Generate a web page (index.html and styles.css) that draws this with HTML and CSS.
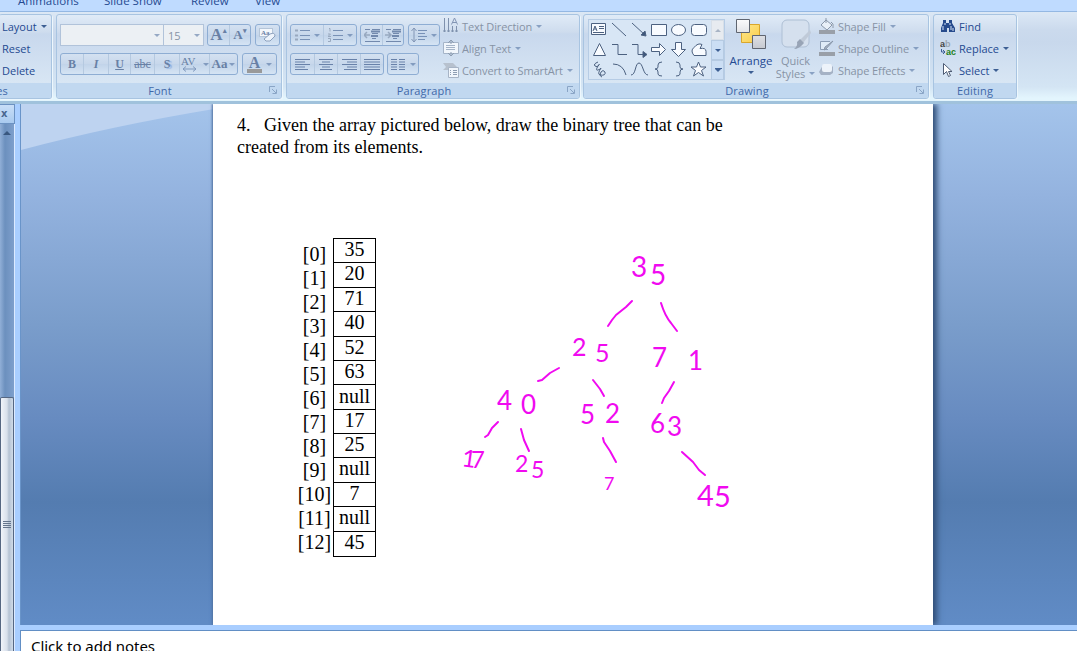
FILE: index.html
```
<!DOCTYPE html>
<html lang="en">
<head>
<meta charset="utf-8">
<title>Presentation editor</title>
<link rel="stylesheet" href="styles.css">
</head>
<body>
<div class="app">
  <nav class="tabs"><span class="t1">Animations</span><span class="t2">Slide Show</span><span class="t3">Review</span><span class="t4">View</span></nav>

  <header class="ribbon">
    <section class="group slides">
      <div class="body col">
        <div class="cmd"><span>Layout</span><i class="dd"></i></div>
        <div class="cmd"><span>Reset</span></div>
        <div class="cmd"><span>Delete</span></div>
      </div>
      <footer><span>Slides</span></footer>
    </section>

    <section class="group font">
      <div class="body rows">
        <div class="row">
          <div class="combo name"><i class="dd"></i></div>
          <div class="combo size"><span>15</span><i class="dd"></i></div>
          <div class="set gap3"><b class="w22 big">A<sup>▴</sup></b><b class="w22 small">A<sup>▾</sup></b></div>
          <div class="set gap4"><b class="w23"><svg width="20" height="18" viewBox="0 0 20 18"><rect x="1.500" y="2.500" width="13" height="8" fill="#f3f7fc" stroke="#b5c5d8"/><text x="3" y="9" class="mini">Aa</text><path d="M6 13l6-5q5-2 5 2l-5 5q-5 1-6-2z" fill="#edf3fb" stroke="#8ba0bd"/></svg></b></div>
        </div>
        <div class="row">
          <div class="set style"><b class="w23">B</b><b class="w25 it">I</b><b class="w23 un">U</b><b class="w24 st">abc</b><b class="w25 sh">S</b><b class="w31"><svg width="18" height="18" viewBox="0 0 18 18"><text x="0" y="10" class="av">AV</text><path d="M2 14H15M5 11.500L2 14l3 2.500M12 11.500l3 2.500-3 2.500" fill="none" stroke="#8099bd"/></svg><i class="dd"></i></b><b class="w29 aa">Aa<i class="dd"></i></b></div>
          <div class="set gap4"><b class="w34 fc"><span>A</span><i class="dd"></i></b></div>
        </div>
      </div>
      <footer><span>Font</span><svg class="launch" width="8" height="8" viewBox="0 0 8 8"><path d="M.5 6V.5H6M3 3l4 4M7.500 3.500v4h-4" fill="none" stroke="#8aa5c6"/></svg></footer>
    </section>

    <section class="group para">
      <div class="body split">
        <div class="rows">
          <div class="row">
            <div class="set"><b class="w32"><svg width="15" height="16" viewBox="0 0 15 16"><path d="M5 3.500H15M5 8.500H15M5 12.500H15" stroke="#7891b6"/><path d="M0 3.500h3M0 8.500h3M0 12.500h3" stroke="#99a9bf" stroke-width="2"/></svg><i class="dd"></i></b><b class="w34"><svg width="15" height="16" viewBox="0 0 15 16"><path d="M5 3.500H15M5 8.500H15M5 12.500H15" stroke="#7891b6"/><path d="M1 1.500h1v3M0 7h2.500L0 9.500h3M0 11.500h2.500v3H0" fill="none" stroke="#99a9bf"/></svg><i class="dd"></i></b></div>
            <div class="set gap3"><b class="w22"><svg width="16" height="16" viewBox="0 0 16 16"><path d="M1 2.500H6M8 2.500H16M8 6.500H14M8 11.500H12M1 14.500H16" stroke="#7289ad"/><path d="M7 4.500H16M7 9H14" stroke="#7289ad" stroke-width="2"/><path d="M0 8h6M3 5L0 8l3 3" fill="none" stroke="#98a9c0" stroke-width="1.500"/></svg></b><b class="w22"><svg width="16" height="16" viewBox="0 0 16 16"><path d="M1 2.500H6M8 2.500H16M8 6.500H14M8 11.500H12M1 14.500H16" stroke="#7289ad"/><path d="M7 4.500H16M7 9H14" stroke="#7289ad" stroke-width="2"/><path d="M0 8h6M3 5l3 3-3 3" fill="none" stroke="#98a9c0" stroke-width="1.500"/></svg></b></div>
            <div class="set gap4"><b class="w31"><svg width="16" height="16" viewBox="0 0 16 16"><path d="M7 3.500H16M7 6.500H14M7 9.500H16M7 12.500H14" stroke="#7891b6"/><path d="M3 1v14M.5 4L3 1l2.500 3M.5 12L3 15l2.500-3" fill="none" stroke="#8296b5"/></svg><i class="dd"></i></b></div>
          </div>
          <div class="row align">
            <div class="set"><b class="w23"><svg width="16" height="13" viewBox="0 0 16 13"><path d="M0 1.500H15M0 4H10M0 6.500H15M0 9H10M0 11.500H13"/></svg></b><b class="w23"><svg width="16" height="13" viewBox="0 0 16 13"><path d="M1 1.500H15M4 4H12M1 6.500H15M4 9H12M2 11.500H14"/></svg></b><b class="w23"><svg width="16" height="13" viewBox="0 0 16 13"><path d="M1 1.500H16M6 4H16M1 6.500H16M6 9H16M3 11.500H16"/></svg></b><b class="w23"><svg width="16" height="13" viewBox="0 0 16 13"><path d="M0 1.500H16M0 4H16M0 6.500H16M0 9H16M0 11.500H16"/></svg></b></div>
            <div class="set gap3"><b class="w31"><svg width="15" height="13" viewBox="0 0 15 13"><path d="M0 1.500H6M8 1.500H14M0 4H6M8 4H14M0 6.500H6M8 6.500H14M0 9H6M8 9H14M0 11.500H6M8 11.500H14"/></svg><i class="dd"></i></b></div>
          </div>
        </div>
        <div class="col off">
          <div class="cmd"><svg width="16" height="16" viewBox="0 0 16 16"><path d="M1.500 0v14M5.500 0v14M9.500 8v6M13.500 8v6M0 13h3M4 13h3M8 13h3M12 13h3" stroke="#7f91ad" fill="none"/><path d="M8.500 6.500L11.500 0l3 6.500M9.500 4.500h4" stroke="#8295b4" fill="none"/></svg><span>Text Direction</span><i class="dd"></i></div>
          <div class="cmd"><svg width="16" height="16" viewBox="0 0 16 16"><path d="M.5 2.500h15v11H.5z" fill="#f1f6fc" stroke="#a5b4c8"/><path d="M3 5.500h9M3 7.500h9M3 9.500h9" stroke="#a5b4c8"/><path d="M8 0v4M5 3l3-3 3 3M8 12v4M5 13l3 3 3-3" fill="none" stroke="#8d9db2"/></svg><span>Align Text</span><i class="dd"></i></div>
          <div class="cmd"><svg width="16" height="16" viewBox="0 0 16 16"><path d="M0 1h10l4 4-3 3H0l3-3z" fill="#b7c1ce"/><path d="M5.500 5.500h10v10h-10z" fill="#f1f6fc" stroke="#a7b4c6"/><path d="M7 8.500h1M10 8.500h4M7 10.500h1M10 10.500h4M7 12.500h1M10 12.500h4" stroke="#8e9db2"/></svg><span>Convert to SmartArt</span><i class="dd"></i></div>
        </div>
      </div>
      <footer><span>Paragraph</span><svg class="launch" width="8" height="8" viewBox="0 0 8 8"><path d="M.5 6V.5H6M3 3l4 4M7.500 3.500v4h-4" fill="none" stroke="#8aa5c6"/></svg></footer>
    </section>

    <section class="group draw">
      <div class="body split">
        <div class="gallery">
          <svg class="shapes" width="122" height="60" viewBox="1 0 122 60">
            <g fill="#f8fbff" stroke="#4c6180">
              <path d="M3.500 3.500h14v11h-14z"/><path d="M5 11l2-5 2 5M6 9h2.500M11 6.500h5M11 8.500h5M5 12.500h11" fill="none"/>
              <path d="M24 3L38 16M44 3L57 15" fill="none"/><path d="M58 16l-5-1 4-4z" fill="#3f587c"/>
              <path d="M63.500 4.500h15v11h-15z"/><ellipse cx="90.500" cy="10" rx="7" ry="5.500"/><rect x="103.500" y="4.500" width="15" height="11" rx="3"/>
              <path d="M11.500 23.500l6 12h-12z"/><path d="M24 24.500h6v10h9M44 24.500h6v10h6" fill="none"/><path d="M55 31.500l4 3-4 3z" fill="#3f587c"/>
              <path d="M63.500 27.500h8v-4l6 6-6 6v-4h-8zM87.500 22.500h6v7h4l-7 7-7-7h4z"/><path d="M106 35.500q-4-5 0-8 4-5 8-3l-2 4q6-1 6 3v4z"/>
              <path d="M10 42q-5 2-3 4t4-1q1-2-1 1-3 5 0 4t3-2q-4 6-1 7 6 1 5-3-2-3-4 0-2 4 1 5M25 44q10 0 13 11M43 55c5 0 4-12 8-12s4 12 9 12" fill="none"/>
              <path d="M74 42q-4 0-4 3v2q0 2-3 2 3 0 3 3v2q0 2 4 2M88 42q4 0 4 3v2q0 2 3 2-3 0-3 3v2q0 2-4 2" fill="none"/><path d="M110.500 42l2 5h5.500l-4.500 3.500 2 5.500-5-3.500-5 3.500 2-5.500-4.500-3.500h5.500z"/>
            </g>
          </svg>
          <div class="scroll"><b class="dis"><i class="up"></i></b><b><i class="dd"></i></b><b><i class="dd more"></i></b></div>
        </div>
        <div class="large arrange"><svg width="32" height="32" viewBox="0 0 32 32"><defs><linearGradient id="gy" x2="1" y2="1"><stop stop-color="#ffe88e"/><stop offset="1" stop-color="#f9cc48"/></linearGradient><linearGradient id="gg" x2="0" y2="1"><stop stop-color="#fbfbfc"/><stop offset="1" stop-color="#c6c9d0"/></linearGradient></defs><path d="M6.500 6.500h18v18h-18z" fill="url(#gy)" stroke="#d9a62c"/><path d="M1.500 1.500h13v13h-13zM17.500 17.500h13v13h-13z" fill="url(#gg)" stroke="#5f6570"/></svg><span>Arrange</span><i class="dd"></i></div>
        <div class="large quick"><svg width="32" height="32" viewBox="0 0 32 32"><rect x="2" y="2" width="27" height="27" rx="5" fill="#d5e0ee" stroke="#aebfd4"/><path d="M30 12L20 22l3 3 8-10z" fill="#c0cad8"/><path d="M20 21l4 4q-5 6-10 6 4-3 3-7z" fill="#98a4b6"/></svg><span>Quick</span><span class="styles">Styles<i class="dd"></i></span></div>
        <div class="col off">
          <div class="cmd"><svg width="16" height="16" viewBox="0 0 16 16"><path d="M2 7l5-5 6 5-5 5zM7 5V0M12 4q3 1 2 6" fill="#e9f0f8" stroke="#8997aa"/><path d="M0 12h16v4H0z" fill="#999fa8"/></svg><span>Shape Fill</span><i class="dd"></i></div>
          <div class="cmd"><svg width="16" height="16" viewBox="0 0 16 16"><path d="M11 1.500H1.500v8H9" fill="#dfebf7" stroke="#8b9db5"/><path d="M14 1L7 9l-2 1 1-3z" fill="#a4b1c2" stroke="#8997aa"/><path d="M0 12h16v4H0z" fill="#999fa8"/></svg><span>Shape Outline</span><i class="dd"></i></div>
          <div class="cmd"><svg width="16" height="16" viewBox="0 0 16 16"><path d="M4 3h8l2 2v6l-3 2H2l-2-3z" fill="#a5b2c5"/><rect x="3" y="2" width="10" height="8" rx="2" fill="#edf3fa"/></svg><span>Shape Effects</span><i class="dd"></i></div>
        </div>
      </div>
      <footer><span>Drawing</span><svg class="launch" width="8" height="8" viewBox="0 0 8 8"><path d="M.5 6V.5H6M3 3l4 4M7.500 3.500v4h-4" fill="none" stroke="#8aa5c6"/></svg></footer>
    </section>

    <section class="group edit">
      <div class="body col">
        <div class="cmd"><svg width="16" height="16" viewBox="0 0 16 16"><path d="M3 2h3v3h3V2h3v3l3 5v4H9v-4H7v4H1v-4l2-5z" fill="#274b8d"/><path d="M3 8v4M5 5v2M11 8v4M10 5v2M13 10v3" stroke="#d8e6f7"/></svg><span>Find</span></div>
        <div class="cmd"><svg width="16" height="16" viewBox="0 0 16 16"><text x="0" y="7" class="ab">a<tspan fill="#9aa5b2">b</tspan></text><text x="6" y="15" class="ab ac">ac</text><path d="M1.500 9v3H5M3 10l2 2-2 2" fill="none" stroke="#3c5d95"/></svg><span>Replace</span><i class="dd"></i></div>
        <div class="cmd"><svg width="16" height="16" viewBox="0 0 16 16"><path d="M3.500 1.500v11l3-3 2 5 2-1-2-4h3.500z" fill="#fff" stroke="#4e5c74"/></svg><span>Select</span><i class="dd"></i></div>
      </div>
      <footer><span>Editing</span></footer>
    </section>
  </header>

  <main class="work">
    <aside class="pane"><div class="close">x</div><div class="track"><i class="up"></i><div class="thumb"><i></i><i></i><i></i><i></i></div></div></aside>
    <div class="editor">
      <div class="desk">
        <svg class="sheen" width="193" height="60" viewBox="0 0 193 60"><path d="M0 0H193V5Q90 22 0 46z" fill="#bed3f0"/></svg>
        <article class="slide">
          <p class="question"><span class="num">4.</span>Given the array pictured below, draw the binary tree that can be<br>created from its elements.</p>
          <div class="array">
            <div class="idx"><span>[0]</span><span>[1]</span><span>[2]</span><span>[3]</span><span>[4]</span><span>[5]</span><span>[6]</span><span>[7]</span><span>[8]</span><span>[9]</span><span>[10]</span><span>[11]</span><span>[12]</span></div>
            <div class="cells"><span>35</span><span>20</span><span>71</span><span>40</span><span>52</span><span>63</span><span class="low">null</span><span>17</span><span>25</span><span>null</span><span>7</span><span>null</span><span>45</span></div>
          </div>
          <svg class="ink" width="300" height="280" viewBox="450 240 300 280">
            <g class="branches">
              <path d="M632 301l-6 6-10 8-4 5-4 6"/><path d="M661 303q4 13 10 20l6 8"/>
              <path d="M559 368l-9 5-8 7-4 1"/><path d="M593 380l7 9 4 7"/><path d="M674 382l-5 9-5 7-2 5"/>
              <path d="M498 422l-6 6-4 7-3 2"/><path d="M521 429l3 11 5 11"/><path d="M603 438l1 4 6 9 6 11"/><path d="M682 452l11 10 6 8 6 5"/>
            </g>
            <g class="digits">
              <text x="631 650" y="277 285" font-size="28">35</text>
              <text x="572 595" y="356 362" font-size="25">25</text>
              <text x="652 688" y="367 370" font-size="26">71</text>
              <text x="497 521" y="410 414" font-size="26">40</text>
              <text x="580 605" y="424 423" font-size="26">52</text>
              <text x="650 667" y="433 436" font-size="26">63</text>
              <text x="461 471" y="466 468" font-size="24" rotate="8 0">17</text>
              <text x="515 531" y="472 478" font-size="23">25</text>
              <text x="604" y="490" font-size="18">7</text>
              <text x="697 714" y="506 507" font-size="29">45</text>
            </g>
          </svg>
        </article>
      </div>
      <div class="notes">Click to add notes</div>
    </div>
  </main>
</div>
</body>
</html>
```
FILE: styles.css
```
* { box-sizing: border-box; }
body { margin: 0; overflow: hidden; font-family: "Open Sans", sans-serif; font-size: 11px; color: #254a91; }
svg { display: block; flex: none; }
i { font-style: normal; }
.app { width: 1077px; height: 651px; display: flex; flex-direction: column; overflow: hidden; }

.tabs { height: 12px; flex: none; display: flex; background: #bfdbff; border-bottom: 1px solid #94b8e3; line-height: 14px; font-size: 11.500px; overflow: hidden; padding-left: 18px; }
.tabs span { margin-top: -6px; flex: none; white-space: nowrap; }
.t1 { width: 86px; } .t2 { width: 87px; } .t3 { width: 64px; }

.ribbon { height: 92px; flex: none; display: flex; gap: 4px; padding: 2px 0 5px; background: linear-gradient(#dce8f5, #cbdaed 18px, #c8d8ec 30px, #d4e5f4 75px, #e3f5fd 86px); border-bottom: 3px solid #a0c2dc; }
.group { flex: none; display: flex; flex-direction: column; border: 1px solid #a8c4e1; border-radius: 3px; background: linear-gradient(#e0ebf7, #cedcee 17px, #c8d8ed 19px, #d8e6f4 68px); box-shadow: 1px 1px 0 #edf7fd; overflow: hidden; height: 85px; }
.group footer { height: 15px; display: flex; align-items: center; justify-content: center; background: #c1d8f0; color: #3f68a9; position: relative; letter-spacing: .15px; padding-right: 18px; }
.launch { position: absolute; right: 4px; top: 3px; }
.body { height: 68px; flex: none; }
.split { display: flex; }
.slides { width: 53px; margin-left: -1px; border-left: 0; }
.slides footer { justify-content: flex-end; padding-right: 43px; }
.font { width: 226px; } .para { width: 294px; margin-right: -1px; } .draw { width: 346px; } .edit { width: 84px; }
.edit footer { padding-right: 0; }
.slides .col { padding-left: 3px; } .edit .col { padding-left: 6px; }
.col { display: flex; flex-direction: column; letter-spacing: -.1px; }
.cmd { height: 22px; display: flex; align-items: center; gap: 3px; white-space: nowrap; }
.edit .cmd span, .slides .cmd span { letter-spacing: 0; }
.cmd .dd { margin-left: 1px; }
.off, .quick { color: #8793a5; }
.off .dd, .quick .dd, .set .dd, .combo .dd { opacity: .5; }
.dd { width: 0; height: 0; flex: none; border: 3px solid transparent; border-top-color: #3d5f93; border-bottom: 0; }
.up { width: 0; height: 0; border: 3px solid transparent; border-bottom-color: #6a7d99; border-top: 0; }

.rows { padding: 9px 0 0 3px; }
.row { display: flex; height: 22px; margin-bottom: 7px; }
.combo { height: 22px; border: 1px solid #b1c3da; background: #ecf0f4; display: flex; align-items: center; justify-content: flex-end; padding-right: 3px; color: #8793a5; }
.name { width: 104px; } .size { width: 40px; border-left: 0; justify-content: space-between; padding-left: 4px; }
.set { display: flex; height: 22px; border: 1px solid #8eadd3; border-radius: 3px; background: linear-gradient(#d4e1f1, #c7d7eb 10px, #c1d3e9 10px, #d5e4f4); }
.set b { display: flex; align-items: center; justify-content: center; gap: 4px; font: bold 12px "Liberation Serif", serif; color: #6880a5; }
.set b + b { border-left: 1px solid #b5c9e0; }
.set svg { stroke: #6881a9; fill: none; }
.set svg text { stroke: none; fill: #6880a5; }
.mini { font: bold 7px "Liberation Serif", serif; } .av { font: 11px "Liberation Serif", serif; }
.set sup { font-size: 7px; margin: -8px 0 0 -4px; }
.set .big { font-size: 17px; } .set .small { font-size: 13px; }
.set .it { font-style: italic; } .set .un { text-decoration: underline; } .set .st { font-weight: normal; text-decoration: line-through; }
.set .sh { text-shadow: 2px 1px 1px #8eb0e2; } .set .aa { font-size: 13px; gap: 2px; }
.fc span { font-size: 16px; line-height: 13px; border-bottom: 4px solid #999; padding: 0 2px; }
.gap3 { margin-left: 3px; } .gap4 { margin-left: 4px; }
.style .w23 { width: 22px; }
.w22 { width: 21px; } .w23 { width: 23px; } .w24 { width: 24px; } .w25 { width: 25px; } .w29 { width: 28px; } .w31 { width: 30px; } .w32 { width: 32px; } .w34 { width: 33px; }
.para .off { margin-left: 3px; }

.gallery { margin: 4px 0 0 4px; height: 61px; width: 137px; display: flex; border: 1px solid #b6cce5; background: #d8e6f5; }
.scroll { width: 14px; }
.scroll b { height: 20px; display: flex; align-items: center; justify-content: center; border: 1px solid #b5cae2; background: #cbdef4; }
.scroll .dis { background: #e7ebf0; border-color: #d7dfe8; } .dis .up { opacity: .5; }
.more::before { content: ""; display: block; width: 7px; border-top: 1px solid #3d5f93; margin: -4px 0 0 -3px; }
.large { display: flex; flex-direction: column; align-items: center; line-height: 13px; padding-top: 3px; font-size: 11.500px; }
.large svg { margin-bottom: 4px; }
.arrange { width: 52px; } .arrange .dd { margin-top: 4px; }
.quick { width: 37px; white-space: nowrap; font-size: 11px; } .styles { display: flex; align-items: center; gap: 4px; }
.draw .off { margin-left: 5px; }
.ab { font: bold 9px "Liberation Sans", sans-serif; fill: #444; } .ac { fill: #258020; }

.work { flex: 1; display: flex; min-height: 0; }
.pane { width: 20px; flex: none; border-right: 5px solid #a9ceff; background: #7195c3; display: flex; flex-direction: column; }
.close { height: 20px; background: linear-gradient(#c8def7, #a9caef); border: 1px solid #6c92c2; border-left: 0; padding-left: 1px; font: bold 10px/17px "DejaVu Sans", sans-serif; color: #48668f; }
.track { flex: 1; padding-top: 7px; background: linear-gradient(90deg, #91afd7, #6c90be 5px, #7e9fcc); display: flex; flex-direction: column; border-right: 1px solid #dceaff; }
.track .up { margin-left: 3px; border-width: 0 4px 4px; border-bottom-color: #39577f; }
.thumb { margin-top: 262px; flex: 1; border: 1px solid #566782; border-bottom: 0; border-radius: 2px 2px 0 0; background: linear-gradient(90deg, #f1f4fa, #d8e0eb 6px, #b5c2d3 8px, #d0dce9); display: flex; flex-direction: column; align-items: center; gap: 1px; padding-top: 123px; }
.thumb i { width: 8px; height: 1px; background: #65758c; }
.editor { flex: 1; min-width: 0; display: flex; flex-direction: column; }
.desk { height: 521px; flex: none; position: relative; overflow: hidden; padding-left: 192px; border-left: 1px solid #6994c9; background: linear-gradient(#a4c4eb, #94b3df 90px, #7a9dcb 220px, #678bc0 315px, #547cb0 398px, #608bc5 517px); }
.sheen { position: absolute; left: 0; top: 0; }
.slide { position: relative; width: 720px; height: 521px; background: #fff; color: #000; font-family: "Liberation Serif", serif; box-shadow: 4px 0 6px #304e77, -1px 0 2px #5577a8; }
.question { margin: 0; padding: 10px 0 0 24px; font-size: 18px; line-height: 22px; white-space: nowrap; }
.num { display: inline-block; width: 27px; }
.array { display: flex; justify-content: flex-end; width: 163px; margin-top: 80px; font-size: 20px; }
.idx { display: grid; grid-auto-rows: 24px; width: 36px; padding: 4px 1px 0 0; justify-items: center; line-height: 24px; }
.cells { width: 43px; height: 319px; display: grid; grid-template-rows: repeat(13, 1fr); border: 1px solid #000; }
.cells span { border-bottom: 1px solid #000; text-align: center; line-height: 20px; min-height: 0; }
.cells span:last-child { border: 0; }
.cells .low { line-height: 22px; }
.ink { position: absolute; left: 237px; top: 136px; }
.branches { fill: none; stroke: #f00af0; stroke-width: 2; stroke-linecap: round; stroke-linejoin: round; }
.digits { font-family: Lato, sans-serif; font-weight: 400; fill: #f00af0; }
.notes { flex: 1; border-top: 5px solid #a9ceff; box-shadow: inset 1px 1px #628fc5; background: #fff; color: #000; padding: 7px 0 0 11px; font: 15px/18px "Noto Sans", sans-serif; letter-spacing: -.05px; white-space: nowrap; }
```
